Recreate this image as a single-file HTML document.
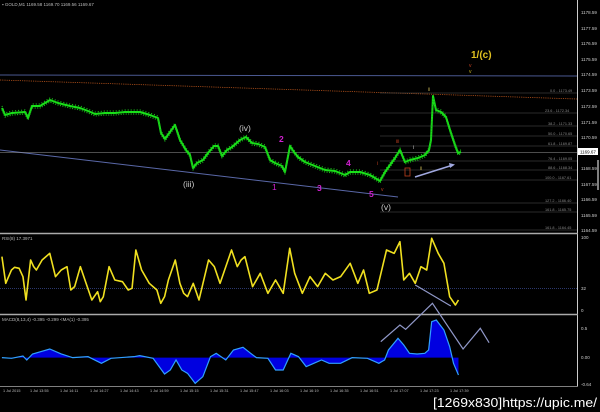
<!DOCTYPE html>
<html><head><meta charset="utf-8"><style>
html,body{margin:0;padding:0;background:#000;width:600px;height:412px;overflow:hidden}
svg{display:block}
text{font-family:"Liberation Sans",sans-serif}
</style></head><body>
<svg width="600" height="412" viewBox="0 0 600 412" xmlns="http://www.w3.org/2000/svg">
<defs>
<polyline id="pr" fill="none" stroke-linejoin="round" points="2,108 5,115 12,113 25,112 28,118 32,106 40,106 50,100 58,103 70,106 80,108 88,111 95,114 105,113 115,113 125,112 140,112 150,115 158,118 161,133 165,139 170,132 175,125 180,140 186,150 190,155 193,168 197,163 203,160 208,153 214,146 218,146 222,156 227,150 232,147 240,140 246,137 252,143 258,144 265,147 270,160 275,163 282,166 285,172 290,146 294,152 298,157 305,162 315,166 325,170 335,171 345,175 350,172 360,172 370,175 375,178 380,181 385,172 390,165 395,158 400,150 405,162 410,160 418,158 425,155 429,150 431,140 433,96 436,110 441,112 446,117 450,130 455,145 458,153 461,152"/>
</defs>
<rect width="600" height="412" fill="#000"/>
<text x="2" y="6" fill="#bbb" font-size="4.5">▪ GOLD,M1  1169.58 1169.70 1169.56 1169.67</text>
<line x1="577.5" y1="0" x2="577.5" y2="386" stroke="#ccc" stroke-width="1"/>
<g fill="#ccc" font-size="4.5">
<text x="581" y="14">1178.59</text><text x="581" y="30">1177.59</text><text x="581" y="45">1176.59</text>
<text x="581" y="61">1175.59</text><text x="581" y="76">1174.59</text><text x="581" y="92">1173.59</text>
<text x="581" y="108">1172.59</text><text x="581" y="124">1171.59</text><text x="581" y="139">1170.59</text>
<text x="581" y="170">1168.59</text><text x="581" y="186">1167.59</text><text x="581" y="201">1166.59</text>
<text x="581" y="217">1165.59</text><text x="581" y="232">1164.59</text>
<text x="581" y="239">100</text><text x="581" y="290">32</text><text x="581" y="312">0</text>
<text x="581" y="330">0.5</text><text x="581" y="359">0.00</text><text x="581" y="386">-0.64</text>
</g>
<rect x="578" y="148" width="20" height="7" fill="#fff"/><text x="580" y="153.5" fill="#000" font-size="4.5">1169.67</text>
<line x1="598" y1="160" x2="598" y2="190" stroke="#fff" stroke-width="1"/>
<line x1="0" y1="233.5" x2="578" y2="233.5" stroke="#aaa" stroke-width="1.5"/>
<line x1="0" y1="314.5" x2="578" y2="314.5" stroke="#aaa" stroke-width="1.5"/>
<line x1="0" y1="386.5" x2="578" y2="386.5" stroke="#aaa" stroke-width="0.7"/>
<line x1="0" y1="75" x2="577" y2="76" stroke="#4a5890" stroke-width="1"/>
<line x1="0" y1="80" x2="577" y2="99" stroke="#b0501a" stroke-width="0.8" stroke-dasharray="1.2,1"/>
<line x1="0" y1="150" x2="398" y2="197" stroke="#5a68a8" stroke-width="1"/>
<line x1="0" y1="152.5" x2="577" y2="152.5" stroke="#999" stroke-width="0.6"/>
<g stroke="#555" stroke-width="0.6">
<line x1="380" y1="93" x2="577" y2="93"/><line x1="380" y1="113" x2="577" y2="113"/>
<line x1="380" y1="126" x2="577" y2="126"/><line x1="380" y1="136" x2="577" y2="136"/>
<line x1="380" y1="146" x2="577" y2="146"/><line x1="380" y1="161" x2="577" y2="161"/>
<line x1="380" y1="170" x2="577" y2="170"/><line x1="380" y1="180" x2="577" y2="180"/>
<line x1="380" y1="203" x2="577" y2="203"/><line x1="380" y1="212" x2="577" y2="212"/>
<line x1="380" y1="230" x2="577" y2="230"/>
</g>
<g fill="#888" font-size="3.8">
<text x="550" y="92">0.0 - 1173.49</text><text x="545" y="112">23.6 - 1172.34</text>
<text x="548" y="125">38.2 - 1171.33</text><text x="548" y="135">50.0 - 1170.65</text>
<text x="548" y="145">61.8 - 1169.87</text><text x="548" y="160">76.4 - 1169.05</text>
<text x="548" y="169">88.6 - 1168.34</text><text x="545" y="179">100.0 - 1167.61</text>
<text x="545" y="202">127.2 - 1166.40</text><text x="545" y="211">161.8 - 1165.75</text>
<text x="545" y="229">161.8 - 1164.45</text>
</g>
<use href="#pr" stroke="#19e019" stroke-width="2"/>
<use href="#pr" stroke="#19c019" stroke-width="1.2" stroke-dasharray="1,1.5" transform="translate(0,2)"/>
<use href="#pr" stroke="#19c019" stroke-width="1.2" stroke-dasharray="1,2" transform="translate(0,-2)"/>
<g font-family="Liberation Sans" font-size="8.5">
<text x="239" y="131" fill="#ccc">(iv)</text><text x="183" y="187" fill="#ccc">(iii)</text>
<text x="381" y="210" fill="#ccc">(v)</text>
<text x="279" y="142" fill="#d020d0" font-weight="bold">2</text>
<text x="272" y="190" fill="#d020d0">1</text>
<text x="317" y="191" fill="#d020d0" font-weight="bold">3</text>
<text x="346" y="166" fill="#d020d0" font-weight="bold">4</text>
<text x="369" y="197" fill="#d020d0" font-weight="bold">5</text>
<text x="471" y="58" fill="#e0c020" font-weight="bold" font-size="10">1/(c)</text>
</g>
<g font-size="5">
<text x="469" y="67" fill="#c04020">v</text><text x="469" y="73" fill="#c0b020">v</text>
<text x="428" y="91" fill="#c0b050">ii</text><text x="396" y="143" fill="#c04020">iii</text>
<text x="413" y="149" fill="#ccc">i</text><text x="420" y="170" fill="#c0b050">ii</text>
<text x="377" y="165" fill="#c04020">i</text><text x="381" y="191" fill="#c04020">v</text>
</g>
<rect x="405" y="168" width="5" height="8" fill="none" stroke="#c04020" stroke-width="0.8"/>
<line x1="415" y1="177" x2="453" y2="165" stroke="#a0a8e0" stroke-width="1.5"/>
<path d="M449,163 L455,164.5 L450,168 Z" fill="#a0a8e0"/>
<line x1="0" y1="288.5" x2="578" y2="288.5" stroke="#3a4a90" stroke-width="0.7" stroke-dasharray="1,1"/>
<text x="2" y="240" fill="#bbb" font-size="4.5">RSI(8) 17.3971</text>
<g transform="translate(0,230) scale(0.3827,0.3333)">
<polyline fill="none" stroke="#f0e020" stroke-width="1.6" vector-effect="non-scaling-stroke" stroke-linejoin="round" points="5,80 15,160 30,120 38,112 50,115 60,140 68,210 80,90 88,110 95,120 110,90 130,70 145,140 160,120 175,110 185,180 195,170 210,110 225,160 240,210 255,185 262,215 270,200 285,110 300,150 320,155 335,180 345,175 355,60 370,120 390,160 410,180 420,220 430,200 440,150 458,90 470,160 480,190 490,200 505,160 520,210 545,90 560,110 575,160 605,60 620,110 630,90 640,80 660,170 680,130 700,190 720,150 740,190 757,55 770,130 790,190 810,140 830,170 850,130 870,150 890,140 915,100 935,160 950,120 965,190 985,180 1010,60 1030,70 1045,35 1055,150 1070,130 1085,160 1100,110 1115,120 1128,25 1145,70 1160,100 1175,200 1190,225 1198,210"/>
<line x1="1085" y1="165" x2="1178" y2="228" stroke="#9098c8" stroke-width="1.2" vector-effect="non-scaling-stroke"/>
</g>
<text x="2" y="321" fill="#bbb" font-size="4.5">MACD(8,13,4) -0.395 -0.299  &lt;MA(1) -0.395</text>
<g transform="translate(0,230) scale(0.3827,0.3333)">
<polygon fill="#0000e0" points="5,383 30,385 60,378 70,390 85,372 130,357 160,372 190,383 230,380 265,400 290,385 350,380 365,377 400,385 430,432 445,420 460,390 475,420 490,430 510,460 530,440 550,380 565,370 590,390 610,360 635,352 655,370 670,383 700,385 720,420 740,420 760,370 780,380 800,410 820,400 840,390 860,400 890,400 920,383 960,385 990,400 1005,390 1015,360 1040,325 1055,345 1070,370 1090,372 1110,370 1120,360 1128,275 1140,270 1160,300 1175,350 1185,400 1198,435 1198,383"/>
<polyline fill="none" stroke="#30a0ff" stroke-width="1.2" vector-effect="non-scaling-stroke" points="5,383 30,385 60,378 70,390 85,372 130,357 160,372 190,383 230,380 265,400 290,385 350,380 365,377 400,385 430,432 445,420 460,390 475,420 490,430 510,460 530,440 550,380 565,370 590,390 610,360 635,352 655,370 670,383 700,385 720,420 740,420 760,370 780,380 800,410 820,400 840,390 860,400 890,400 920,383 960,385 990,400 1005,390 1015,360 1040,325 1055,345 1070,370 1090,372 1110,370 1120,360 1128,275 1140,270 1160,300 1175,350 1185,400 1198,435"/>
<polyline fill="none" stroke="#9098c8" stroke-width="1.2" vector-effect="non-scaling-stroke" points="995,335 1045,285 1060,298 1130,220 1210,357 1255,295 1278,338"/>
</g>
<g fill="#bbb" font-size="3.8">
<text x="3" y="392">1 Jul 2015</text><text x="30" y="392">1 Jul 13:55</text><text x="60" y="392">1 Jul 14:11</text>
<text x="90" y="392">1 Jul 14:27</text><text x="120" y="392">1 Jul 14:43</text><text x="150" y="392">1 Jul 14:59</text>
<text x="180" y="392">1 Jul 15:15</text><text x="210" y="392">1 Jul 15:31</text><text x="240" y="392">1 Jul 15:47</text>
<text x="270" y="392">1 Jul 16:03</text><text x="300" y="392">1 Jul 16:19</text><text x="330" y="392">1 Jul 16:35</text>
<text x="360" y="392">1 Jul 16:51</text><text x="390" y="392">1 Jul 17:07</text><text x="420" y="392">1 Jul 17:23</text>
<text x="450" y="392">1 Jul 17:39</text>
</g>
<text x="433" y="407" fill="#fff" font-size="13" font-family="DejaVu Sans Mono, Liberation Mono, monospace" textLength="164" lengthAdjust="spacingAndGlyphs">[1269x830]https://upic.me/</text>
</svg>
</body></html>
